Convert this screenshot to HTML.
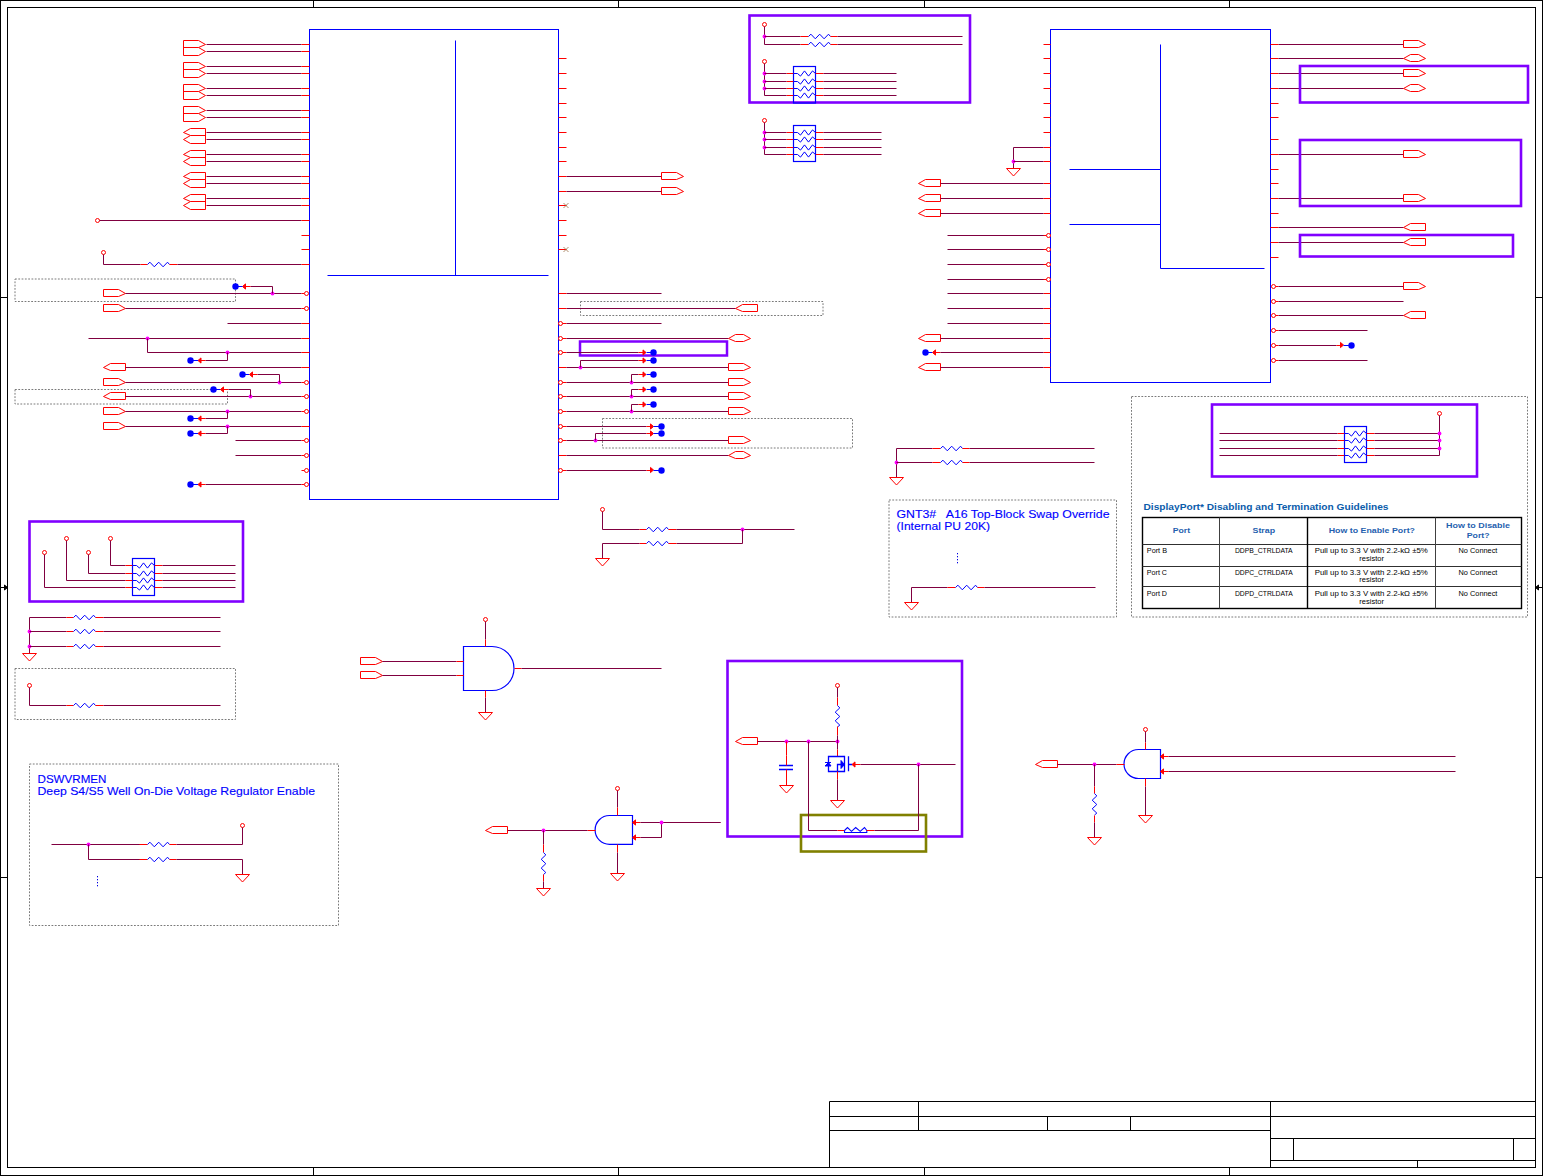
<!DOCTYPE html>
<html><head><meta charset="utf-8"><style>
html,body{margin:0;padding:0;background:#fff;width:1544px;height:1176px;overflow:hidden}
svg{display:block}
text{font-family:"Liberation Sans",sans-serif}
</style></head><body>
<svg width="1544" height="1176" viewBox="0 0 1544 1176">
<rect x="0" y="0" width="1544" height="1176" fill="#fff"/>
<rect x="0.5" y="0.5" width="1542" height="1175" stroke="#000" stroke-width="1" fill="none"/>
<rect x="7.5" y="7.5" width="1528" height="1160" stroke="#000" stroke-width="1" fill="none"/>
<polyline points="313.5,0.5 313.5,7.5" stroke="#000" stroke-width="1" fill="none"/>
<polyline points="313.5,1167.5 313.5,1175.5" stroke="#000" stroke-width="1" fill="none"/>
<polyline points="618.5,0.5 618.5,7.5" stroke="#000" stroke-width="1" fill="none"/>
<polyline points="618.5,1167.5 618.5,1175.5" stroke="#000" stroke-width="1" fill="none"/>
<polyline points="924.5,0.5 924.5,7.5" stroke="#000" stroke-width="1" fill="none"/>
<polyline points="924.5,1167.5 924.5,1175.5" stroke="#000" stroke-width="1" fill="none"/>
<polyline points="1229.5,0.5 1229.5,7.5" stroke="#000" stroke-width="1" fill="none"/>
<polyline points="1229.5,1167.5 1229.5,1175.5" stroke="#000" stroke-width="1" fill="none"/>
<polyline points="0.5,297.5 7.5,297.5" stroke="#000" stroke-width="1" fill="none"/>
<polyline points="1535.5,297.5 1542.5,297.5" stroke="#000" stroke-width="1" fill="none"/>
<polyline points="0.5,877.5 7.5,877.5" stroke="#000" stroke-width="1" fill="none"/>
<polyline points="1535.5,877.5 1542.5,877.5" stroke="#000" stroke-width="1" fill="none"/>
<polyline points="0.5,587.5 7.5,587.5" stroke="#000" stroke-width="1" fill="none"/>
<polygon points="7.5,587.5 4.5,585 4.5,590" stroke="#000" stroke-width="1" fill="#000"/>
<polyline points="1535.5,587.5 1542.5,587.5" stroke="#000" stroke-width="1" fill="none"/>
<polygon points="1535.5,587.5 1538.5,585 1538.5,590" stroke="#000" stroke-width="1" fill="#000"/>
<polyline points="829.5,1101.5 1535.5,1101.5" stroke="#000" stroke-width="1" fill="none"/>
<polyline points="829.5,1116.5 1535.5,1116.5" stroke="#000" stroke-width="1" fill="none"/>
<polyline points="829.5,1130.5 1270.5,1130.5" stroke="#000" stroke-width="1" fill="none"/>
<polyline points="829.5,1101.5 829.5,1167.5" stroke="#000" stroke-width="1" fill="none"/>
<polyline points="918.5,1101.5 918.5,1130.5" stroke="#000" stroke-width="1" fill="none"/>
<polyline points="1047.5,1116.5 1047.5,1130.5" stroke="#000" stroke-width="1" fill="none"/>
<polyline points="1130.5,1116.5 1130.5,1130.5" stroke="#000" stroke-width="1" fill="none"/>
<polyline points="1270.5,1101.5 1270.5,1167.5" stroke="#000" stroke-width="1" fill="none"/>
<polyline points="1270.5,1138.5 1535.5,1138.5" stroke="#000" stroke-width="1" fill="none"/>
<polyline points="1270.5,1160.5 1535.5,1160.5" stroke="#000" stroke-width="1" fill="none"/>
<polyline points="1293.5,1138.5 1293.5,1160.5" stroke="#000" stroke-width="1" fill="none"/>
<polyline points="1513.5,1138.5 1513.5,1160.5" stroke="#000" stroke-width="1" fill="none"/>
<polyline points="1417.5,1160.5 1417.5,1167.5" stroke="#000" stroke-width="1" fill="none"/>
<rect x="309.5" y="29.5" width="249" height="470" stroke="#0000ff" stroke-width="1" fill="none"/>
<polyline points="455.5,40.5 455.5,275.5" stroke="#0000ff" stroke-width="1" fill="none"/>
<polyline points="327.5,275.5 548.5,275.5" stroke="#0000ff" stroke-width="1" fill="none"/>
<polyline points="198.5,40.5 183.5,40.5 183.5,55.5 198.5,55.5 205.5,51.5 198.5,47.5 205.5,44.5 198.5,40.5" stroke="#ff0000" stroke-width="1" fill="none"/>
<polyline points="183.5,47.5 198.5,47.5" stroke="#ff0000" stroke-width="1" fill="none"/>
<polyline points="206.5,44.5 301.5,44.5" stroke="#800040" stroke-width="1" fill="none"/>
<polyline points="301.5,44.5 309.5,44.5" stroke="#ff0000" stroke-width="1" fill="none"/>
<polyline points="206.5,51.5 301.5,51.5" stroke="#800040" stroke-width="1" fill="none"/>
<polyline points="301.5,51.5 309.5,51.5" stroke="#ff0000" stroke-width="1" fill="none"/>
<polyline points="198.5,62.5 183.5,62.5 183.5,77.5 198.5,77.5 205.5,73.5 198.5,69.5 205.5,66.5 198.5,62.5" stroke="#ff0000" stroke-width="1" fill="none"/>
<polyline points="183.5,69.5 198.5,69.5" stroke="#ff0000" stroke-width="1" fill="none"/>
<polyline points="206.5,66.5 301.5,66.5" stroke="#800040" stroke-width="1" fill="none"/>
<polyline points="301.5,66.5 309.5,66.5" stroke="#ff0000" stroke-width="1" fill="none"/>
<polyline points="206.5,73.5 301.5,73.5" stroke="#800040" stroke-width="1" fill="none"/>
<polyline points="301.5,73.5 309.5,73.5" stroke="#ff0000" stroke-width="1" fill="none"/>
<polyline points="198.5,84.5 183.5,84.5 183.5,99.5 198.5,99.5 205.5,95.5 198.5,91.5 205.5,88.5 198.5,84.5" stroke="#ff0000" stroke-width="1" fill="none"/>
<polyline points="183.5,91.5 198.5,91.5" stroke="#ff0000" stroke-width="1" fill="none"/>
<polyline points="206.5,88.5 301.5,88.5" stroke="#800040" stroke-width="1" fill="none"/>
<polyline points="301.5,88.5 309.5,88.5" stroke="#ff0000" stroke-width="1" fill="none"/>
<polyline points="206.5,95.5 301.5,95.5" stroke="#800040" stroke-width="1" fill="none"/>
<polyline points="301.5,95.5 309.5,95.5" stroke="#ff0000" stroke-width="1" fill="none"/>
<polyline points="198.5,106.5 183.5,106.5 183.5,121.5 198.5,121.5 205.5,117.5 198.5,113.5 205.5,110.5 198.5,106.5" stroke="#ff0000" stroke-width="1" fill="none"/>
<polyline points="183.5,113.5 198.5,113.5" stroke="#ff0000" stroke-width="1" fill="none"/>
<polyline points="206.5,110.5 301.5,110.5" stroke="#800040" stroke-width="1" fill="none"/>
<polyline points="301.5,110.5 309.5,110.5" stroke="#ff0000" stroke-width="1" fill="none"/>
<polyline points="206.5,117.5 301.5,117.5" stroke="#800040" stroke-width="1" fill="none"/>
<polyline points="301.5,117.5 309.5,117.5" stroke="#ff0000" stroke-width="1" fill="none"/>
<polyline points="190.5,128.5 205.5,128.5 205.5,143.5 190.5,143.5 183.5,139.5 190.5,135.5 183.5,132.5 190.5,128.5" stroke="#ff0000" stroke-width="1" fill="none"/>
<polyline points="190.5,135.5 205.5,135.5" stroke="#ff0000" stroke-width="1" fill="none"/>
<polyline points="206.5,132.5 301.5,132.5" stroke="#800040" stroke-width="1" fill="none"/>
<polyline points="301.5,132.5 309.5,132.5" stroke="#ff0000" stroke-width="1" fill="none"/>
<polyline points="206.5,139.5 301.5,139.5" stroke="#800040" stroke-width="1" fill="none"/>
<polyline points="301.5,139.5 309.5,139.5" stroke="#ff0000" stroke-width="1" fill="none"/>
<polyline points="190.5,150.5 205.5,150.5 205.5,165.5 190.5,165.5 183.5,161.5 190.5,157.5 183.5,154.5 190.5,150.5" stroke="#ff0000" stroke-width="1" fill="none"/>
<polyline points="190.5,157.5 205.5,157.5" stroke="#ff0000" stroke-width="1" fill="none"/>
<polyline points="206.5,154.5 301.5,154.5" stroke="#800040" stroke-width="1" fill="none"/>
<polyline points="301.5,154.5 309.5,154.5" stroke="#ff0000" stroke-width="1" fill="none"/>
<polyline points="206.5,161.5 301.5,161.5" stroke="#800040" stroke-width="1" fill="none"/>
<polyline points="301.5,161.5 309.5,161.5" stroke="#ff0000" stroke-width="1" fill="none"/>
<polyline points="190.5,172.5 205.5,172.5 205.5,187.5 190.5,187.5 183.5,183.5 190.5,179.5 183.5,176.5 190.5,172.5" stroke="#ff0000" stroke-width="1" fill="none"/>
<polyline points="190.5,179.5 205.5,179.5" stroke="#ff0000" stroke-width="1" fill="none"/>
<polyline points="206.5,176.5 301.5,176.5" stroke="#800040" stroke-width="1" fill="none"/>
<polyline points="301.5,176.5 309.5,176.5" stroke="#ff0000" stroke-width="1" fill="none"/>
<polyline points="206.5,183.5 301.5,183.5" stroke="#800040" stroke-width="1" fill="none"/>
<polyline points="301.5,183.5 309.5,183.5" stroke="#ff0000" stroke-width="1" fill="none"/>
<polyline points="190.5,194.5 205.5,194.5 205.5,209.5 190.5,209.5 183.5,205.5 190.5,201.5 183.5,198.5 190.5,194.5" stroke="#ff0000" stroke-width="1" fill="none"/>
<polyline points="190.5,201.5 205.5,201.5" stroke="#ff0000" stroke-width="1" fill="none"/>
<polyline points="206.5,198.5 301.5,198.5" stroke="#800040" stroke-width="1" fill="none"/>
<polyline points="301.5,198.5 309.5,198.5" stroke="#ff0000" stroke-width="1" fill="none"/>
<polyline points="206.5,205.5 301.5,205.5" stroke="#800040" stroke-width="1" fill="none"/>
<polyline points="301.5,205.5 309.5,205.5" stroke="#ff0000" stroke-width="1" fill="none"/>
<circle cx="97.5" cy="220.5" r="2" stroke="#ff0000" stroke-width="1" fill="#fff"/>
<polyline points="99.5,220.5 301.5,220.5" stroke="#800040" stroke-width="1" fill="none"/>
<polyline points="301.5,220.5 309.5,220.5" stroke="#ff0000" stroke-width="1" fill="none"/>
<polyline points="301.5,235.5 309.5,235.5" stroke="#ff0000" stroke-width="1" fill="none"/>
<polyline points="301.5,249.5 309.5,249.5" stroke="#ff0000" stroke-width="1" fill="none"/>
<circle cx="103.5" cy="252.5" r="2" stroke="#ff0000" stroke-width="1" fill="#fff"/>
<polyline points="103.5,254.5 103.5,264.5 140.5,264.5" stroke="#800040" stroke-width="1" fill="none"/>
<polyline points="140.5,264.5 147.5,264.5" stroke="#ff0000" stroke-width="1" fill="none"/>
<polyline points="147.5,264.5 149.9,262.2 154.3,266.8 158.7,262.2 163.1,266.8 167.5,262.2 169.5,264.5" stroke="#0000ff" stroke-width="1" fill="none"/>
<polyline points="169.5,264.5 177.5,264.5" stroke="#ff0000" stroke-width="1" fill="none"/>
<polyline points="177.5,264.5 301.5,264.5" stroke="#800040" stroke-width="1" fill="none"/>
<polyline points="301.5,264.5 309.5,264.5" stroke="#ff0000" stroke-width="1" fill="none"/>
<rect x="15" y="279" width="220.5" height="22.5" stroke="#7a7a7a" stroke-width="1" fill="none" stroke-dasharray="1.8,1.5"/>
<polygon points="103.5,289.5 118.5,289.5 125.5,293.5 118.5,296.5 103.5,296.5" stroke="#ff0000" stroke-width="1" fill="none"/>
<polyline points="125.5,293.5 301.5,293.5" stroke="#800040" stroke-width="1" fill="none"/>
<polyline points="301.5,293.5 304.5,293.5" stroke="#ff0000" stroke-width="1" fill="none"/>
<circle cx="306.5" cy="293.5" r="2" stroke="#ff0000" stroke-width="1" fill="#fff"/>
<circle cx="272.5" cy="293.5" r="1.9" fill="#ff00ff"/>
<polyline points="272.5,293.5 272.5,286.5 250.5,286.5" stroke="#800040" stroke-width="1" fill="none"/>
<polyline points="245.5,286.5 250.5,286.5" stroke="#ff0000" stroke-width="1" fill="none"/>
<polygon points="242.5,286.5 245.5,283.9 245.5,289.1" stroke="#ff0000" stroke-width="1" fill="#ff0000"/>
<polyline points="235.5,286.5 242.5,286.5" stroke="#0000ff" stroke-width="1" fill="none"/>
<circle cx="235.5" cy="286.5" r="3.2" fill="#0000ff"/>
<polygon points="103.5,304.5 118.5,304.5 125.5,308.5 118.5,311.5 103.5,311.5" stroke="#ff0000" stroke-width="1" fill="none"/>
<polyline points="125.5,308.5 301.5,308.5" stroke="#800040" stroke-width="1" fill="none"/>
<polyline points="301.5,308.5 304.5,308.5" stroke="#ff0000" stroke-width="1" fill="none"/>
<circle cx="306.5" cy="308.5" r="2" stroke="#ff0000" stroke-width="1" fill="#fff"/>
<polyline points="227.5,323.5 301.5,323.5" stroke="#800040" stroke-width="1" fill="none"/>
<polyline points="301.5,323.5 309.5,323.5" stroke="#ff0000" stroke-width="1" fill="none"/>
<polyline points="88.5,338.5 301.5,338.5" stroke="#800040" stroke-width="1" fill="none"/>
<polyline points="301.5,338.5 309.5,338.5" stroke="#ff0000" stroke-width="1" fill="none"/>
<circle cx="147.5" cy="338.5" r="1.9" fill="#ff00ff"/>
<polyline points="147.5,338.5 147.5,352.5 301.5,352.5" stroke="#800040" stroke-width="1" fill="none"/>
<polyline points="301.5,352.5 309.5,352.5" stroke="#ff0000" stroke-width="1" fill="none"/>
<circle cx="227.5" cy="352.5" r="1.9" fill="#ff00ff"/>
<polyline points="227.5,352.5 227.5,360.5 205.5,360.5" stroke="#800040" stroke-width="1" fill="none"/>
<circle cx="190.5" cy="360.5" r="3.2" fill="#0000ff"/>
<polyline points="190.5,360.5 198.5,360.5" stroke="#0000ff" stroke-width="1" fill="none"/>
<polygon points="198,360.5 201,357.9 201,363.1" stroke="#ff0000" stroke-width="1" fill="#ff0000"/>
<polyline points="200.5,360.5 205.5,360.5" stroke="#ff0000" stroke-width="1" fill="none"/>
<polygon points="103.5,367.5 110.5,363.5 125.5,363.5 125.5,370.5 110.5,370.5" stroke="#ff0000" stroke-width="1" fill="none"/>
<polyline points="125.5,367.5 301.5,367.5" stroke="#800040" stroke-width="1" fill="none"/>
<polyline points="301.5,367.5 309.5,367.5" stroke="#ff0000" stroke-width="1" fill="none"/>
<polygon points="103.5,378.5 118.5,378.5 125.5,382.5 118.5,385.5 103.5,385.5" stroke="#ff0000" stroke-width="1" fill="none"/>
<polyline points="125.5,382.5 301.5,382.5" stroke="#800040" stroke-width="1" fill="none"/>
<polyline points="301.5,382.5 304.5,382.5" stroke="#ff0000" stroke-width="1" fill="none"/>
<circle cx="306.5" cy="382.5" r="2" stroke="#ff0000" stroke-width="1" fill="#fff"/>
<circle cx="279.5" cy="382.5" r="1.9" fill="#ff00ff"/>
<polyline points="279.5,382.5 279.5,374.5 257.5,374.5" stroke="#800040" stroke-width="1" fill="none"/>
<circle cx="242.5" cy="374.5" r="3.2" fill="#0000ff"/>
<polyline points="242.5,374.5 249.5,374.5" stroke="#0000ff" stroke-width="1" fill="none"/>
<polygon points="249.5,374.5 252.5,371.9 252.5,377.1" stroke="#ff0000" stroke-width="1" fill="#ff0000"/>
<polyline points="252.5,374.5 257.5,374.5" stroke="#ff0000" stroke-width="1" fill="none"/>
<rect x="15" y="389.5" width="212.5" height="14.5" stroke="#7a7a7a" stroke-width="1" fill="none" stroke-dasharray="1.8,1.5"/>
<polygon points="103.5,396.5 110.5,392.5 125.5,392.5 125.5,399.5 110.5,399.5" stroke="#ff0000" stroke-width="1" fill="none"/>
<polyline points="125.5,396.5 301.5,396.5" stroke="#800040" stroke-width="1" fill="none"/>
<polyline points="301.5,396.5 304.5,396.5" stroke="#ff0000" stroke-width="1" fill="none"/>
<circle cx="306.5" cy="396.5" r="2" stroke="#ff0000" stroke-width="1" fill="#fff"/>
<circle cx="250.5" cy="396.5" r="1.9" fill="#ff00ff"/>
<polyline points="250.5,396.5 250.5,389.5 228.5,389.5" stroke="#800040" stroke-width="1" fill="none"/>
<circle cx="213.5" cy="389.5" r="3.2" fill="#0000ff"/>
<polyline points="213.5,389.5 220.5,389.5" stroke="#0000ff" stroke-width="1" fill="none"/>
<polygon points="220.5,389.5 223.5,386.9 223.5,392.1" stroke="#ff0000" stroke-width="1" fill="#ff0000"/>
<polyline points="223.5,389.5 228.5,389.5" stroke="#ff0000" stroke-width="1" fill="none"/>
<polygon points="103.5,407.5 118.5,407.5 125.5,411.5 118.5,414.5 103.5,414.5" stroke="#ff0000" stroke-width="1" fill="none"/>
<polyline points="125.5,411.5 301.5,411.5" stroke="#800040" stroke-width="1" fill="none"/>
<polyline points="301.5,411.5 304.5,411.5" stroke="#ff0000" stroke-width="1" fill="none"/>
<circle cx="306.5" cy="411.5" r="2" stroke="#ff0000" stroke-width="1" fill="#fff"/>
<circle cx="227.5" cy="411.5" r="1.9" fill="#ff00ff"/>
<polyline points="227.5,411.5 227.5,418.5 205.5,418.5" stroke="#800040" stroke-width="1" fill="none"/>
<circle cx="190.5" cy="418.5" r="3.2" fill="#0000ff"/>
<polyline points="190.5,418.5 198.5,418.5" stroke="#0000ff" stroke-width="1" fill="none"/>
<polygon points="198,418.5 201,415.9 201,421.1" stroke="#ff0000" stroke-width="1" fill="#ff0000"/>
<polyline points="200.5,418.5 205.5,418.5" stroke="#ff0000" stroke-width="1" fill="none"/>
<polygon points="103.5,422.5 118.5,422.5 125.5,426.5 118.5,429.5 103.5,429.5" stroke="#ff0000" stroke-width="1" fill="none"/>
<polyline points="125.5,426.5 301.5,426.5" stroke="#800040" stroke-width="1" fill="none"/>
<polyline points="301.5,426.5 309.5,426.5" stroke="#ff0000" stroke-width="1" fill="none"/>
<circle cx="227.5" cy="426.5" r="1.9" fill="#ff00ff"/>
<polyline points="227.5,426.5 227.5,433.5 205.5,433.5" stroke="#800040" stroke-width="1" fill="none"/>
<circle cx="190.5" cy="433.5" r="3.2" fill="#0000ff"/>
<polyline points="190.5,433.5 198.5,433.5" stroke="#0000ff" stroke-width="1" fill="none"/>
<polygon points="198,433.5 201,430.9 201,436.1" stroke="#ff0000" stroke-width="1" fill="#ff0000"/>
<polyline points="200.5,433.5 205.5,433.5" stroke="#ff0000" stroke-width="1" fill="none"/>
<polyline points="235.5,440.5 301.5,440.5" stroke="#800040" stroke-width="1" fill="none"/>
<polyline points="301.5,440.5 304.5,440.5" stroke="#ff0000" stroke-width="1" fill="none"/>
<circle cx="306.5" cy="440.5" r="2" stroke="#ff0000" stroke-width="1" fill="#fff"/>
<polyline points="235.5,455.5 301.5,455.5" stroke="#800040" stroke-width="1" fill="none"/>
<polyline points="301.5,455.5 304.5,455.5" stroke="#ff0000" stroke-width="1" fill="none"/>
<circle cx="306.5" cy="455.5" r="2" stroke="#ff0000" stroke-width="1" fill="#fff"/>
<polyline points="301.5,470.5 304.5,470.5" stroke="#ff0000" stroke-width="1" fill="none"/>
<circle cx="306.5" cy="470.5" r="2" stroke="#ff0000" stroke-width="1" fill="#fff"/>
<polyline points="205.5,484.5 301.5,484.5" stroke="#800040" stroke-width="1" fill="none"/>
<polyline points="301.5,484.5 304.5,484.5" stroke="#ff0000" stroke-width="1" fill="none"/>
<circle cx="306.5" cy="484.5" r="2" stroke="#ff0000" stroke-width="1" fill="#fff"/>
<circle cx="190.5" cy="484.5" r="3.2" fill="#0000ff"/>
<polyline points="190.5,484.5 198.5,484.5" stroke="#0000ff" stroke-width="1" fill="none"/>
<polygon points="198,484.5 201,481.9 201,487.1" stroke="#ff0000" stroke-width="1" fill="#ff0000"/>
<polyline points="200.5,484.5 205.5,484.5" stroke="#ff0000" stroke-width="1" fill="none"/>
<polyline points="558.5,58.5 566.5,58.5" stroke="#ff0000" stroke-width="1" fill="none"/>
<polyline points="558.5,73.5 566.5,73.5" stroke="#ff0000" stroke-width="1" fill="none"/>
<polyline points="558.5,88.5 566.5,88.5" stroke="#ff0000" stroke-width="1" fill="none"/>
<polyline points="558.5,103.5 566.5,103.5" stroke="#ff0000" stroke-width="1" fill="none"/>
<polyline points="558.5,117.5 566.5,117.5" stroke="#ff0000" stroke-width="1" fill="none"/>
<polyline points="558.5,132.5 566.5,132.5" stroke="#ff0000" stroke-width="1" fill="none"/>
<polyline points="558.5,147.5 566.5,147.5" stroke="#ff0000" stroke-width="1" fill="none"/>
<polyline points="558.5,161.5 566.5,161.5" stroke="#ff0000" stroke-width="1" fill="none"/>
<polyline points="558.5,176.5 566.5,176.5" stroke="#ff0000" stroke-width="1" fill="none"/>
<polyline points="558.5,191.5 566.5,191.5" stroke="#ff0000" stroke-width="1" fill="none"/>
<polyline points="558.5,205.5 566.5,205.5" stroke="#ff0000" stroke-width="1" fill="none"/>
<polyline points="558.5,220.5 566.5,220.5" stroke="#ff0000" stroke-width="1" fill="none"/>
<polyline points="558.5,235.5 566.5,235.5" stroke="#ff0000" stroke-width="1" fill="none"/>
<polyline points="558.5,249.5 566.5,249.5" stroke="#ff0000" stroke-width="1" fill="none"/>
<polyline points="563.5,203 568.5,208" stroke="#9a7048" stroke-width="0.8" fill="none"/>
<polyline points="563.5,208 568.5,203" stroke="#9a7048" stroke-width="0.8" fill="none"/>
<polyline points="563.5,247 568.5,252" stroke="#9a7048" stroke-width="0.8" fill="none"/>
<polyline points="563.5,252 568.5,247" stroke="#9a7048" stroke-width="0.8" fill="none"/>
<polyline points="566.5,176.5 661.5,176.5" stroke="#800040" stroke-width="1" fill="none"/>
<polygon points="661.5,172.5 676.5,172.5 683.5,176.5 676.5,179.5 661.5,179.5" stroke="#ff0000" stroke-width="1" fill="none"/>
<polyline points="566.5,191.5 661.5,191.5" stroke="#800040" stroke-width="1" fill="none"/>
<polygon points="661.5,187.5 676.5,187.5 683.5,191.5 676.5,194.5 661.5,194.5" stroke="#ff0000" stroke-width="1" fill="none"/>
<polyline points="566.5,293.5 661.5,293.5" stroke="#800040" stroke-width="1" fill="none"/>
<polyline points="558.5,293.5 566.5,293.5" stroke="#ff0000" stroke-width="1" fill="none"/>
<rect x="580.5" y="301.5" width="242.5" height="14" stroke="#7a7a7a" stroke-width="1" fill="none" stroke-dasharray="1.8,1.5"/>
<polyline points="566.5,308.5 735.5,308.5" stroke="#800040" stroke-width="1" fill="none"/>
<polyline points="558.5,308.5 566.5,308.5" stroke="#ff0000" stroke-width="1" fill="none"/>
<polygon points="735.5,308.5 742.5,304.5 757.5,304.5 757.5,311.5 742.5,311.5" stroke="#ff0000" stroke-width="1" fill="none"/>
<circle cx="560.5" cy="323.5" r="2" stroke="#ff0000" stroke-width="1" fill="#fff"/>
<polyline points="562.5,323.5 566.5,323.5" stroke="#ff0000" stroke-width="1" fill="none"/>
<polyline points="566.5,323.5 661.5,323.5" stroke="#800040" stroke-width="1" fill="none"/>
<circle cx="560.5" cy="338.5" r="2" stroke="#ff0000" stroke-width="1" fill="#fff"/>
<polyline points="562.5,338.5 566.5,338.5" stroke="#ff0000" stroke-width="1" fill="none"/>
<polyline points="566.5,338.5 728.5,338.5" stroke="#800040" stroke-width="1" fill="none"/>
<polygon points="728.5,338.5 735.5,334.5 743.5,334.5 750.5,338.5 743.5,341.5 735.5,341.5" stroke="#ff0000" stroke-width="1" fill="none"/>
<rect x="580" y="341.5" width="147" height="14" stroke="#8000ff" stroke-width="2.5" fill="none"/>
<circle cx="560.5" cy="352.5" r="2" stroke="#ff0000" stroke-width="1" fill="#fff"/>
<polyline points="562.5,352.5 566.5,352.5" stroke="#ff0000" stroke-width="1" fill="none"/>
<polyline points="566.5,352.5 638.5,352.5" stroke="#800040" stroke-width="1" fill="none"/>
<polyline points="638.5,352.5 643.5,352.5" stroke="#ff0000" stroke-width="1" fill="none"/>
<polygon points="646,352.5 643,349.9 643,355.1" stroke="#ff0000" stroke-width="1" fill="#ff0000"/>
<polyline points="646.5,352.5 653.5,352.5" stroke="#0000ff" stroke-width="1" fill="none"/>
<circle cx="653.5" cy="352.5" r="3.2" fill="#0000ff"/>
<polyline points="558.5,367.5 566.5,367.5" stroke="#ff0000" stroke-width="1" fill="none"/>
<polyline points="566.5,367.5 728.5,367.5" stroke="#800040" stroke-width="1" fill="none"/>
<polygon points="728.5,363.5 743.5,363.5 750.5,367.5 743.5,370.5 728.5,370.5" stroke="#ff0000" stroke-width="1" fill="none"/>
<circle cx="580.5" cy="367.5" r="1.9" fill="#ff00ff"/>
<polyline points="580.5,367.5 580.5,360.5 638.5,360.5" stroke="#800040" stroke-width="1" fill="none"/>
<polyline points="638.5,360.5 643.5,360.5" stroke="#ff0000" stroke-width="1" fill="none"/>
<polygon points="646,360.5 643,357.9 643,363.1" stroke="#ff0000" stroke-width="1" fill="#ff0000"/>
<polyline points="646.5,360.5 653.5,360.5" stroke="#0000ff" stroke-width="1" fill="none"/>
<circle cx="653.5" cy="360.5" r="3.2" fill="#0000ff"/>
<circle cx="560.5" cy="382.5" r="2" stroke="#ff0000" stroke-width="1" fill="#fff"/>
<polyline points="562.5,382.5 566.5,382.5" stroke="#ff0000" stroke-width="1" fill="none"/>
<polyline points="566.5,382.5 728.5,382.5" stroke="#800040" stroke-width="1" fill="none"/>
<polygon points="728.5,378.5 743.5,378.5 750.5,382.5 743.5,385.5 728.5,385.5" stroke="#ff0000" stroke-width="1" fill="none"/>
<circle cx="631.5" cy="382.5" r="1.9" fill="#ff00ff"/>
<polyline points="631.5,382.5 631.5,374.5 638.5,374.5" stroke="#800040" stroke-width="1" fill="none"/>
<polyline points="638.5,374.5 643.5,374.5" stroke="#ff0000" stroke-width="1" fill="none"/>
<polygon points="646,374.5 643,371.9 643,377.1" stroke="#ff0000" stroke-width="1" fill="#ff0000"/>
<polyline points="646.5,374.5 653.5,374.5" stroke="#0000ff" stroke-width="1" fill="none"/>
<circle cx="653.5" cy="374.5" r="3.2" fill="#0000ff"/>
<circle cx="560.5" cy="396.5" r="2" stroke="#ff0000" stroke-width="1" fill="#fff"/>
<polyline points="562.5,396.5 566.5,396.5" stroke="#ff0000" stroke-width="1" fill="none"/>
<polyline points="566.5,396.5 728.5,396.5" stroke="#800040" stroke-width="1" fill="none"/>
<polygon points="728.5,392.5 743.5,392.5 750.5,396.5 743.5,399.5 728.5,399.5" stroke="#ff0000" stroke-width="1" fill="none"/>
<circle cx="631.5" cy="396.5" r="1.9" fill="#ff00ff"/>
<polyline points="631.5,396.5 631.5,389.5 638.5,389.5" stroke="#800040" stroke-width="1" fill="none"/>
<polyline points="638.5,389.5 643.5,389.5" stroke="#ff0000" stroke-width="1" fill="none"/>
<polygon points="646,389.5 643,386.9 643,392.1" stroke="#ff0000" stroke-width="1" fill="#ff0000"/>
<polyline points="646.5,389.5 653.5,389.5" stroke="#0000ff" stroke-width="1" fill="none"/>
<circle cx="653.5" cy="389.5" r="3.2" fill="#0000ff"/>
<circle cx="560.5" cy="411.5" r="2" stroke="#ff0000" stroke-width="1" fill="#fff"/>
<polyline points="562.5,411.5 566.5,411.5" stroke="#ff0000" stroke-width="1" fill="none"/>
<polyline points="566.5,411.5 728.5,411.5" stroke="#800040" stroke-width="1" fill="none"/>
<polygon points="728.5,407.5 743.5,407.5 750.5,411.5 743.5,414.5 728.5,414.5" stroke="#ff0000" stroke-width="1" fill="none"/>
<circle cx="631.5" cy="411.5" r="1.9" fill="#ff00ff"/>
<polyline points="631.5,411.5 631.5,404.5 638.5,404.5" stroke="#800040" stroke-width="1" fill="none"/>
<polyline points="638.5,404.5 643.5,404.5" stroke="#ff0000" stroke-width="1" fill="none"/>
<polygon points="646,404.5 643,401.9 643,407.1" stroke="#ff0000" stroke-width="1" fill="#ff0000"/>
<polyline points="646.5,404.5 653.5,404.5" stroke="#0000ff" stroke-width="1" fill="none"/>
<circle cx="653.5" cy="404.5" r="3.2" fill="#0000ff"/>
<circle cx="560.5" cy="426.5" r="2" stroke="#ff0000" stroke-width="1" fill="#fff"/>
<polyline points="562.5,426.5 566.5,426.5" stroke="#ff0000" stroke-width="1" fill="none"/>
<polyline points="566.5,426.5 646.5,426.5" stroke="#800040" stroke-width="1" fill="none"/>
<polyline points="646.5,426.5 651.5,426.5" stroke="#ff0000" stroke-width="1" fill="none"/>
<polygon points="653.5,426.5 650.5,423.9 650.5,429.1" stroke="#ff0000" stroke-width="1" fill="#ff0000"/>
<polyline points="653.5,426.5 661.5,426.5" stroke="#0000ff" stroke-width="1" fill="none"/>
<circle cx="661.5" cy="426.5" r="3.2" fill="#0000ff"/>
<rect x="602.5" y="418.5" width="250" height="29.5" stroke="#7a7a7a" stroke-width="1" fill="none" stroke-dasharray="1.8,1.5"/>
<circle cx="560.5" cy="440.5" r="2" stroke="#ff0000" stroke-width="1" fill="#fff"/>
<polyline points="562.5,440.5 566.5,440.5" stroke="#ff0000" stroke-width="1" fill="none"/>
<polyline points="566.5,440.5 728.5,440.5" stroke="#800040" stroke-width="1" fill="none"/>
<polygon points="728.5,436.5 743.5,436.5 750.5,440.5 743.5,443.5 728.5,443.5" stroke="#ff0000" stroke-width="1" fill="none"/>
<circle cx="595.5" cy="440.5" r="1.9" fill="#ff00ff"/>
<polyline points="595.5,440.5 595.5,433.5 646.5,433.5" stroke="#800040" stroke-width="1" fill="none"/>
<polyline points="646.5,433.5 651.5,433.5" stroke="#ff0000" stroke-width="1" fill="none"/>
<polygon points="653.5,433.5 650.5,430.9 650.5,436.1" stroke="#ff0000" stroke-width="1" fill="#ff0000"/>
<polyline points="653.5,433.5 661.5,433.5" stroke="#0000ff" stroke-width="1" fill="none"/>
<circle cx="661.5" cy="433.5" r="3.2" fill="#0000ff"/>
<polyline points="558.5,455.5 566.5,455.5" stroke="#ff0000" stroke-width="1" fill="none"/>
<polyline points="566.5,455.5 728.5,455.5" stroke="#800040" stroke-width="1" fill="none"/>
<polygon points="728.5,455.5 735.5,451.5 743.5,451.5 750.5,455.5 743.5,458.5 735.5,458.5" stroke="#ff0000" stroke-width="1" fill="none"/>
<circle cx="560.5" cy="470.5" r="2" stroke="#ff0000" stroke-width="1" fill="#fff"/>
<polyline points="562.5,470.5 566.5,470.5" stroke="#ff0000" stroke-width="1" fill="none"/>
<polyline points="566.5,470.5 646.5,470.5" stroke="#800040" stroke-width="1" fill="none"/>
<polyline points="646.5,470.5 651.5,470.5" stroke="#ff0000" stroke-width="1" fill="none"/>
<polygon points="653.5,470 650.5,467.4 650.5,472.6" stroke="#ff0000" stroke-width="1" fill="#ff0000"/>
<polyline points="653.5,470.5 661.5,470.5" stroke="#0000ff" stroke-width="1" fill="none"/>
<circle cx="661.5" cy="470.5" r="3.2" fill="#0000ff"/>
<circle cx="602.5" cy="509.5" r="2" stroke="#ff0000" stroke-width="1" fill="#fff"/>
<polyline points="602.5,511.5 602.5,529.5 639.5,529.5" stroke="#800040" stroke-width="1" fill="none"/>
<polyline points="639.5,529.5 646.5,529.5" stroke="#ff0000" stroke-width="1" fill="none"/>
<polyline points="646.5,529.5 648.9,527.2 653.3,531.8 657.7,527.2 662.1,531.8 666.5,527.2 668.5,529.5" stroke="#0000ff" stroke-width="1" fill="none"/>
<polyline points="668.5,529.5 676.5,529.5" stroke="#ff0000" stroke-width="1" fill="none"/>
<polyline points="676.5,529.5 794.5,529.5" stroke="#800040" stroke-width="1" fill="none"/>
<circle cx="742.5" cy="529.5" r="1.9" fill="#ff00ff"/>
<polyline points="742.5,529.5 742.5,543.5 676.5,543.5" stroke="#800040" stroke-width="1" fill="none"/>
<polyline points="639.5,543.5 646.5,543.5" stroke="#ff0000" stroke-width="1" fill="none"/>
<polyline points="646.5,543.5 648.9,541.2 653.3,545.8 657.7,541.2 662.1,545.8 666.5,541.2 668.5,543.5" stroke="#0000ff" stroke-width="1" fill="none"/>
<polyline points="668.5,543.5 676.5,543.5" stroke="#ff0000" stroke-width="1" fill="none"/>
<polyline points="602.5,543.5 639.5,543.5" stroke="#800040" stroke-width="1" fill="none"/>
<polyline points="602.5,543.5 602.5,558.5" stroke="#800040" stroke-width="1" fill="none"/>
<polygon points="595.5,558.5 609.5,558.5 602.5,566" stroke="#ff0000" stroke-width="1" fill="none"/>
<rect x="749.5" y="15.5" width="220.5" height="87" stroke="#8000ff" stroke-width="2.6" fill="none"/>
<circle cx="764.5" cy="24.5" r="2" stroke="#ff0000" stroke-width="1" fill="#fff"/>
<polyline points="764.5,26.5 764.5,44.5" stroke="#800040" stroke-width="1" fill="none"/>
<circle cx="764.5" cy="36.5" r="1.9" fill="#ff00ff"/>
<polyline points="764.5,36.5 800.5,36.5" stroke="#800040" stroke-width="1" fill="none"/>
<polyline points="800.5,36.5 808.5,36.5" stroke="#ff0000" stroke-width="1" fill="none"/>
<polyline points="808.5,36.5 810.9,34.2 815.3,38.8 819.7,34.2 824.1,38.8 828.5,34.2 830.5,36.5" stroke="#0000ff" stroke-width="1" fill="none"/>
<polyline points="830.5,36.5 837.5,36.5" stroke="#ff0000" stroke-width="1" fill="none"/>
<polyline points="837.5,36.5 962.5,36.5" stroke="#800040" stroke-width="1" fill="none"/>
<polyline points="764.5,44.5 800.5,44.5" stroke="#800040" stroke-width="1" fill="none"/>
<polyline points="800.5,44.5 808.5,44.5" stroke="#ff0000" stroke-width="1" fill="none"/>
<polyline points="808.5,44.5 810.9,42.2 815.3,46.8 819.7,42.2 824.1,46.8 828.5,42.2 830.5,44.5" stroke="#0000ff" stroke-width="1" fill="none"/>
<polyline points="830.5,44.5 837.5,44.5" stroke="#ff0000" stroke-width="1" fill="none"/>
<polyline points="837.5,44.5 962.5,44.5" stroke="#800040" stroke-width="1" fill="none"/>
<circle cx="764.5" cy="61.5" r="2" stroke="#ff0000" stroke-width="1" fill="#fff"/>
<polyline points="764.5,63.5 764.5,95.5" stroke="#800040" stroke-width="1" fill="none"/>
<circle cx="764.5" cy="73.5" r="1.9" fill="#ff00ff"/>
<circle cx="764.5" cy="81.5" r="1.9" fill="#ff00ff"/>
<circle cx="764.5" cy="88.5" r="1.9" fill="#ff00ff"/>
<rect x="793.5" y="66.5" width="22" height="36.5" stroke="#0000ff" stroke-width="1.2" fill="none"/>
<polyline points="786.5,73.5 793.5,73.5" stroke="#ff0000" stroke-width="1" fill="none"/>
<polyline points="815.5,73.5 823.5,73.5" stroke="#ff0000" stroke-width="1" fill="none"/>
<polyline points="793.5,73.5 797.5,73.5 800.5,76.1 804.5,70.9 808.5,76.1 812.5,70.9 815.5,73.5" stroke="#0000ff" stroke-width="1" fill="none"/>
<polyline points="764.5,73.5 786.5,73.5" stroke="#800040" stroke-width="1" fill="none"/>
<polyline points="823.5,73.5 896.5,73.5" stroke="#800040" stroke-width="1" fill="none"/>
<polyline points="786.5,81.5 793.5,81.5" stroke="#ff0000" stroke-width="1" fill="none"/>
<polyline points="815.5,81.5 823.5,81.5" stroke="#ff0000" stroke-width="1" fill="none"/>
<polyline points="793.5,81.5 797.5,81.5 800.5,84.1 804.5,78.9 808.5,84.1 812.5,78.9 815.5,81.5" stroke="#0000ff" stroke-width="1" fill="none"/>
<polyline points="764.5,81.5 786.5,81.5" stroke="#800040" stroke-width="1" fill="none"/>
<polyline points="823.5,81.5 896.5,81.5" stroke="#800040" stroke-width="1" fill="none"/>
<polyline points="786.5,88.5 793.5,88.5" stroke="#ff0000" stroke-width="1" fill="none"/>
<polyline points="815.5,88.5 823.5,88.5" stroke="#ff0000" stroke-width="1" fill="none"/>
<polyline points="793.5,88.5 797.5,88.5 800.5,91.1 804.5,85.9 808.5,91.1 812.5,85.9 815.5,88.5" stroke="#0000ff" stroke-width="1" fill="none"/>
<polyline points="764.5,88.5 786.5,88.5" stroke="#800040" stroke-width="1" fill="none"/>
<polyline points="823.5,88.5 896.5,88.5" stroke="#800040" stroke-width="1" fill="none"/>
<polyline points="786.5,95.5 793.5,95.5" stroke="#ff0000" stroke-width="1" fill="none"/>
<polyline points="815.5,95.5 823.5,95.5" stroke="#ff0000" stroke-width="1" fill="none"/>
<polyline points="793.5,95.5 797.5,95.5 800.5,98.1 804.5,92.9 808.5,98.1 812.5,92.9 815.5,95.5" stroke="#0000ff" stroke-width="1" fill="none"/>
<polyline points="764.5,95.5 786.5,95.5" stroke="#800040" stroke-width="1" fill="none"/>
<polyline points="823.5,95.5 896.5,95.5" stroke="#800040" stroke-width="1" fill="none"/>
<circle cx="764.5" cy="120.5" r="2" stroke="#ff0000" stroke-width="1" fill="#fff"/>
<polyline points="764.5,122.5 764.5,154.5" stroke="#800040" stroke-width="1" fill="none"/>
<circle cx="764.5" cy="132.5" r="1.9" fill="#ff00ff"/>
<circle cx="764.5" cy="139.5" r="1.9" fill="#ff00ff"/>
<circle cx="764.5" cy="147.5" r="1.9" fill="#ff00ff"/>
<rect x="793.5" y="125.5" width="22" height="36" stroke="#0000ff" stroke-width="1.2" fill="none"/>
<polyline points="786.5,132.5 793.5,132.5" stroke="#ff0000" stroke-width="1" fill="none"/>
<polyline points="815.5,132.5 823.5,132.5" stroke="#ff0000" stroke-width="1" fill="none"/>
<polyline points="793.5,132.5 797.5,132.5 800.5,135.1 804.5,129.9 808.5,135.1 812.5,129.9 815.5,132.5" stroke="#0000ff" stroke-width="1" fill="none"/>
<polyline points="764.5,132.5 786.5,132.5" stroke="#800040" stroke-width="1" fill="none"/>
<polyline points="823.5,132.5 881.5,132.5" stroke="#800040" stroke-width="1" fill="none"/>
<polyline points="786.5,139.5 793.5,139.5" stroke="#ff0000" stroke-width="1" fill="none"/>
<polyline points="815.5,139.5 823.5,139.5" stroke="#ff0000" stroke-width="1" fill="none"/>
<polyline points="793.5,139.5 797.5,139.5 800.5,142.1 804.5,136.9 808.5,142.1 812.5,136.9 815.5,139.5" stroke="#0000ff" stroke-width="1" fill="none"/>
<polyline points="764.5,139.5 786.5,139.5" stroke="#800040" stroke-width="1" fill="none"/>
<polyline points="823.5,139.5 881.5,139.5" stroke="#800040" stroke-width="1" fill="none"/>
<polyline points="786.5,147.5 793.5,147.5" stroke="#ff0000" stroke-width="1" fill="none"/>
<polyline points="815.5,147.5 823.5,147.5" stroke="#ff0000" stroke-width="1" fill="none"/>
<polyline points="793.5,147.5 797.5,147.5 800.5,150.1 804.5,144.9 808.5,150.1 812.5,144.9 815.5,147.5" stroke="#0000ff" stroke-width="1" fill="none"/>
<polyline points="764.5,147.5 786.5,147.5" stroke="#800040" stroke-width="1" fill="none"/>
<polyline points="823.5,147.5 881.5,147.5" stroke="#800040" stroke-width="1" fill="none"/>
<polyline points="786.5,154.5 793.5,154.5" stroke="#ff0000" stroke-width="1" fill="none"/>
<polyline points="815.5,154.5 823.5,154.5" stroke="#ff0000" stroke-width="1" fill="none"/>
<polyline points="793.5,154.5 797.5,154.5 800.5,157.1 804.5,151.9 808.5,157.1 812.5,151.9 815.5,154.5" stroke="#0000ff" stroke-width="1" fill="none"/>
<polyline points="764.5,154.5 786.5,154.5" stroke="#800040" stroke-width="1" fill="none"/>
<polyline points="823.5,154.5 881.5,154.5" stroke="#800040" stroke-width="1" fill="none"/>
<rect x="1050.5" y="29.5" width="220" height="353" stroke="#0000ff" stroke-width="1" fill="none"/>
<polyline points="1160.5,44.5 1160.5,268.5" stroke="#0000ff" stroke-width="1" fill="none"/>
<polyline points="1069.5,169.5 1160.5,169.5" stroke="#0000ff" stroke-width="1" fill="none"/>
<polyline points="1069.5,224.5 1160.5,224.5" stroke="#0000ff" stroke-width="1" fill="none"/>
<polyline points="1160.5,268.5 1264.5,268.5" stroke="#0000ff" stroke-width="1" fill="none"/>
<polyline points="1043.5,44.5 1050.5,44.5" stroke="#ff0000" stroke-width="1" fill="none"/>
<polyline points="1043.5,58.5 1050.5,58.5" stroke="#ff0000" stroke-width="1" fill="none"/>
<polyline points="1043.5,73.5 1050.5,73.5" stroke="#ff0000" stroke-width="1" fill="none"/>
<polyline points="1043.5,88.5 1050.5,88.5" stroke="#ff0000" stroke-width="1" fill="none"/>
<polyline points="1043.5,103.5 1050.5,103.5" stroke="#ff0000" stroke-width="1" fill="none"/>
<polyline points="1043.5,117.5 1050.5,117.5" stroke="#ff0000" stroke-width="1" fill="none"/>
<polyline points="1043.5,132.5 1050.5,132.5" stroke="#ff0000" stroke-width="1" fill="none"/>
<polyline points="1043.5,147.5 1050.5,147.5" stroke="#ff0000" stroke-width="1" fill="none"/>
<polyline points="1043.5,161.5 1050.5,161.5" stroke="#ff0000" stroke-width="1" fill="none"/>
<polyline points="1043.5,183.5 1050.5,183.5" stroke="#ff0000" stroke-width="1" fill="none"/>
<polyline points="1043.5,198.5 1050.5,198.5" stroke="#ff0000" stroke-width="1" fill="none"/>
<polyline points="1043.5,213.5 1050.5,213.5" stroke="#ff0000" stroke-width="1" fill="none"/>
<polyline points="1043.5,293.5 1050.5,293.5" stroke="#ff0000" stroke-width="1" fill="none"/>
<polyline points="1043.5,308.5 1050.5,308.5" stroke="#ff0000" stroke-width="1" fill="none"/>
<polyline points="1043.5,323.5 1050.5,323.5" stroke="#ff0000" stroke-width="1" fill="none"/>
<polyline points="1043.5,338.5 1050.5,338.5" stroke="#ff0000" stroke-width="1" fill="none"/>
<polyline points="1043.5,352.5 1050.5,352.5" stroke="#ff0000" stroke-width="1" fill="none"/>
<polyline points="1043.5,367.5 1050.5,367.5" stroke="#ff0000" stroke-width="1" fill="none"/>
<polyline points="1043.5,147.5 1013.5,147.5 1013.5,168.5" stroke="#800040" stroke-width="1" fill="none"/>
<circle cx="1013.5" cy="161.5" r="1.9" fill="#ff00ff"/>
<polyline points="1013.5,161.5 1043.5,161.5" stroke="#800040" stroke-width="1" fill="none"/>
<polygon points="1006.5,168.5 1020.5,168.5 1013.5,176" stroke="#ff0000" stroke-width="1" fill="none"/>
<polygon points="918.5,183.5 925.5,179.5 940.5,179.5 940.5,186.5 925.5,186.5" stroke="#ff0000" stroke-width="1" fill="none"/>
<polyline points="940.5,183.5 1043.5,183.5" stroke="#800040" stroke-width="1" fill="none"/>
<polygon points="918.5,198.5 925.5,194.5 940.5,194.5 940.5,201.5 925.5,201.5" stroke="#ff0000" stroke-width="1" fill="none"/>
<polyline points="940.5,198.5 1043.5,198.5" stroke="#800040" stroke-width="1" fill="none"/>
<polygon points="918.5,213.5 925.5,209.5 940.5,209.5 940.5,216.5 925.5,216.5" stroke="#ff0000" stroke-width="1" fill="none"/>
<polyline points="940.5,213.5 1043.5,213.5" stroke="#800040" stroke-width="1" fill="none"/>
<polygon points="918.5,338.5 925.5,334.5 940.5,334.5 940.5,341.5 925.5,341.5" stroke="#ff0000" stroke-width="1" fill="none"/>
<polyline points="940.5,338.5 1043.5,338.5" stroke="#800040" stroke-width="1" fill="none"/>
<polygon points="918.5,367.5 925.5,363.5 940.5,363.5 940.5,370.5 925.5,370.5" stroke="#ff0000" stroke-width="1" fill="none"/>
<polyline points="940.5,367.5 1043.5,367.5" stroke="#800040" stroke-width="1" fill="none"/>
<polyline points="947.5,235.5 1046.5,235.5" stroke="#800040" stroke-width="1" fill="none"/>
<polyline points="1043.5,235.5 1046.5,235.5" stroke="#ff0000" stroke-width="1" fill="none"/>
<circle cx="1048.5" cy="235.5" r="2" stroke="#ff0000" stroke-width="1" fill="#fff"/>
<polyline points="947.5,249.5 1046.5,249.5" stroke="#800040" stroke-width="1" fill="none"/>
<polyline points="1043.5,249.5 1046.5,249.5" stroke="#ff0000" stroke-width="1" fill="none"/>
<circle cx="1048.5" cy="249.5" r="2" stroke="#ff0000" stroke-width="1" fill="#fff"/>
<polyline points="947.5,264.5 1046.5,264.5" stroke="#800040" stroke-width="1" fill="none"/>
<polyline points="1043.5,264.5 1046.5,264.5" stroke="#ff0000" stroke-width="1" fill="none"/>
<circle cx="1048.5" cy="264.5" r="2" stroke="#ff0000" stroke-width="1" fill="#fff"/>
<polyline points="947.5,279.5 1046.5,279.5" stroke="#800040" stroke-width="1" fill="none"/>
<polyline points="1043.5,279.5 1046.5,279.5" stroke="#ff0000" stroke-width="1" fill="none"/>
<circle cx="1048.5" cy="279.5" r="2" stroke="#ff0000" stroke-width="1" fill="#fff"/>
<polyline points="947.5,293.5 1043.5,293.5" stroke="#800040" stroke-width="1" fill="none"/>
<polyline points="947.5,308.5 1043.5,308.5" stroke="#800040" stroke-width="1" fill="none"/>
<polyline points="947.5,323.5 1043.5,323.5" stroke="#800040" stroke-width="1" fill="none"/>
<circle cx="925.5" cy="352.5" r="3.2" fill="#0000ff"/>
<polyline points="925.5,352.5 932.5,352.5" stroke="#0000ff" stroke-width="1" fill="none"/>
<polygon points="932.5,352.5 935.5,349.9 935.5,355.1" stroke="#ff0000" stroke-width="1" fill="#ff0000"/>
<polyline points="935.5,352.5 940.5,352.5" stroke="#ff0000" stroke-width="1" fill="none"/>
<polyline points="940.5,352.5 1043.5,352.5" stroke="#800040" stroke-width="1" fill="none"/>
<polyline points="1270.5,44.5 1278.5,44.5" stroke="#ff0000" stroke-width="1" fill="none"/>
<polyline points="1270.5,58.5 1278.5,58.5" stroke="#ff0000" stroke-width="1" fill="none"/>
<polyline points="1270.5,73.5 1278.5,73.5" stroke="#ff0000" stroke-width="1" fill="none"/>
<polyline points="1270.5,88.5 1278.5,88.5" stroke="#ff0000" stroke-width="1" fill="none"/>
<polyline points="1270.5,103.5 1278.5,103.5" stroke="#ff0000" stroke-width="1" fill="none"/>
<polyline points="1270.5,117.5 1278.5,117.5" stroke="#ff0000" stroke-width="1" fill="none"/>
<polyline points="1270.5,139.5 1278.5,139.5" stroke="#ff0000" stroke-width="1" fill="none"/>
<polyline points="1270.5,154.5 1278.5,154.5" stroke="#ff0000" stroke-width="1" fill="none"/>
<polyline points="1270.5,169.5 1278.5,169.5" stroke="#ff0000" stroke-width="1" fill="none"/>
<polyline points="1270.5,183.5 1278.5,183.5" stroke="#ff0000" stroke-width="1" fill="none"/>
<polyline points="1270.5,198.5 1278.5,198.5" stroke="#ff0000" stroke-width="1" fill="none"/>
<polyline points="1270.5,213.5 1278.5,213.5" stroke="#ff0000" stroke-width="1" fill="none"/>
<polyline points="1270.5,227.5 1278.5,227.5" stroke="#ff0000" stroke-width="1" fill="none"/>
<polyline points="1270.5,242.5 1278.5,242.5" stroke="#ff0000" stroke-width="1" fill="none"/>
<polyline points="1270.5,257.5 1278.5,257.5" stroke="#ff0000" stroke-width="1" fill="none"/>
<polyline points="1278.5,44.5 1403.5,44.5" stroke="#800040" stroke-width="1" fill="none"/>
<polygon points="1403.5,40.5 1418.5,40.5 1425.5,44.5 1418.5,47.5 1403.5,47.5" stroke="#ff0000" stroke-width="1" fill="none"/>
<polyline points="1278.5,58.5 1403.5,58.5" stroke="#800040" stroke-width="1" fill="none"/>
<polygon points="1403.5,58.5 1410.5,54.5 1418.5,54.5 1425.5,58.5 1418.5,61.5 1410.5,61.5" stroke="#ff0000" stroke-width="1" fill="none"/>
<polyline points="1278.5,73.5 1403.5,73.5" stroke="#800040" stroke-width="1" fill="none"/>
<polygon points="1403.5,69.5 1418.5,69.5 1425.5,73.5 1418.5,76.5 1403.5,76.5" stroke="#ff0000" stroke-width="1" fill="none"/>
<polyline points="1278.5,88.5 1403.5,88.5" stroke="#800040" stroke-width="1" fill="none"/>
<polygon points="1403.5,88.5 1410.5,84.5 1418.5,84.5 1425.5,88.5 1418.5,91.5 1410.5,91.5" stroke="#ff0000" stroke-width="1" fill="none"/>
<polyline points="1278.5,154.5 1403.5,154.5" stroke="#800040" stroke-width="1" fill="none"/>
<polygon points="1403.5,150.5 1418.5,150.5 1425.5,154.5 1418.5,157.5 1403.5,157.5" stroke="#ff0000" stroke-width="1" fill="none"/>
<polyline points="1278.5,198.5 1403.5,198.5" stroke="#800040" stroke-width="1" fill="none"/>
<polygon points="1403.5,194.5 1418.5,194.5 1425.5,198.5 1418.5,201.5 1403.5,201.5" stroke="#ff0000" stroke-width="1" fill="none"/>
<polyline points="1278.5,227.5 1403.5,227.5" stroke="#800040" stroke-width="1" fill="none"/>
<polygon points="1403.5,227.5 1410.5,223.5 1425.5,223.5 1425.5,230.5 1410.5,230.5" stroke="#ff0000" stroke-width="1" fill="none"/>
<polyline points="1278.5,242.5 1403.5,242.5" stroke="#800040" stroke-width="1" fill="none"/>
<polygon points="1403.5,242.5 1410.5,238.5 1425.5,238.5 1425.5,245.5 1410.5,245.5" stroke="#ff0000" stroke-width="1" fill="none"/>
<circle cx="1273.5" cy="286.5" r="2" stroke="#ff0000" stroke-width="1" fill="#fff"/>
<polyline points="1275.5,286.5 1278.5,286.5" stroke="#ff0000" stroke-width="1" fill="none"/>
<polyline points="1278.5,286.5 1403.5,286.5" stroke="#800040" stroke-width="1" fill="none"/>
<polygon points="1403.5,282.5 1418.5,282.5 1425.5,286.5 1418.5,289.5 1403.5,289.5" stroke="#ff0000" stroke-width="1" fill="none"/>
<circle cx="1273.5" cy="301.5" r="2" stroke="#ff0000" stroke-width="1" fill="#fff"/>
<polyline points="1275.5,301.5 1278.5,301.5" stroke="#ff0000" stroke-width="1" fill="none"/>
<polyline points="1278.5,301.5 1403.5,301.5" stroke="#800040" stroke-width="1" fill="none"/>
<circle cx="1273.5" cy="315.5" r="2" stroke="#ff0000" stroke-width="1" fill="#fff"/>
<polyline points="1275.5,315.5 1278.5,315.5" stroke="#ff0000" stroke-width="1" fill="none"/>
<polyline points="1278.5,315.5 1403.5,315.5" stroke="#800040" stroke-width="1" fill="none"/>
<polygon points="1403.5,315.5 1410.5,311.5 1425.5,311.5 1425.5,318.5 1410.5,318.5" stroke="#ff0000" stroke-width="1" fill="none"/>
<circle cx="1273.5" cy="330.5" r="2" stroke="#ff0000" stroke-width="1" fill="#fff"/>
<polyline points="1275.5,330.5 1278.5,330.5" stroke="#ff0000" stroke-width="1" fill="none"/>
<polyline points="1278.5,330.5 1367.5,330.5" stroke="#800040" stroke-width="1" fill="none"/>
<circle cx="1273.5" cy="345.5" r="2" stroke="#ff0000" stroke-width="1" fill="#fff"/>
<polyline points="1275.5,345.5 1278.5,345.5" stroke="#ff0000" stroke-width="1" fill="none"/>
<polyline points="1278.5,345.5 1336.5,345.5" stroke="#800040" stroke-width="1" fill="none"/>
<polyline points="1336.5,345.5 1341.5,345.5" stroke="#ff0000" stroke-width="1" fill="none"/>
<polygon points="1343.5,345 1340.5,342.4 1340.5,347.6" stroke="#ff0000" stroke-width="1" fill="#ff0000"/>
<polyline points="1343.5,345.5 1351.5,345.5" stroke="#0000ff" stroke-width="1" fill="none"/>
<circle cx="1351.5" cy="345.5" r="3.2" fill="#0000ff"/>
<circle cx="1273.5" cy="360.5" r="2" stroke="#ff0000" stroke-width="1" fill="#fff"/>
<polyline points="1275.5,360.5 1278.5,360.5" stroke="#ff0000" stroke-width="1" fill="none"/>
<polyline points="1278.5,360.5 1367.5,360.5" stroke="#800040" stroke-width="1" fill="none"/>
<rect x="1300" y="66" width="228" height="36.5" stroke="#8000ff" stroke-width="2.6" fill="none"/>
<rect x="1300" y="140" width="221" height="66" stroke="#8000ff" stroke-width="2.6" fill="none"/>
<rect x="1300" y="235" width="213" height="21.5" stroke="#8000ff" stroke-width="2.6" fill="none"/>
<polyline points="896.5,448.5 896.5,477.5" stroke="#800040" stroke-width="1" fill="none"/>
<circle cx="896.5" cy="462.5" r="1.9" fill="#ff00ff"/>
<polyline points="896.5,448.5 932.5,448.5" stroke="#800040" stroke-width="1" fill="none"/>
<polyline points="932.5,448.5 940.5,448.5" stroke="#ff0000" stroke-width="1" fill="none"/>
<polyline points="940.5,448.5 942.9,446.2 947.3,450.8 951.7,446.2 956.1,450.8 960.5,446.2 962.5,448.5" stroke="#0000ff" stroke-width="1" fill="none"/>
<polyline points="962.5,448.5 969.5,448.5" stroke="#ff0000" stroke-width="1" fill="none"/>
<polyline points="969.5,448.5 1094.5,448.5" stroke="#800040" stroke-width="1" fill="none"/>
<polyline points="896.5,462.5 932.5,462.5" stroke="#800040" stroke-width="1" fill="none"/>
<polyline points="932.5,462.5 940.5,462.5" stroke="#ff0000" stroke-width="1" fill="none"/>
<polyline points="940.5,462.5 942.9,460.2 947.3,464.8 951.7,460.2 956.1,464.8 960.5,460.2 962.5,462.5" stroke="#0000ff" stroke-width="1" fill="none"/>
<polyline points="962.5,462.5 969.5,462.5" stroke="#ff0000" stroke-width="1" fill="none"/>
<polyline points="969.5,462.5 1094.5,462.5" stroke="#800040" stroke-width="1" fill="none"/>
<polygon points="889.5,477.5 903.5,477.5 896.5,485" stroke="#ff0000" stroke-width="1" fill="none"/>
<rect x="889" y="500" width="227.5" height="117" stroke="#7a7a7a" stroke-width="1" fill="none" stroke-dasharray="1.8,1.5"/>
<text x="896.5" y="517.8" font-size="11.3" fill="#0000ff" font-weight="normal" text-anchor="start" textLength="213" lengthAdjust="spacingAndGlyphs" stroke="#0000ff" stroke-width="0.12">GNT3#   A16 Top-Block Swap Override</text>
<text x="896.5" y="529.8" font-size="11.3" fill="#0000ff" font-weight="normal" text-anchor="start" textLength="93.5" lengthAdjust="spacingAndGlyphs" stroke="#0000ff" stroke-width="0.12">(Internal PU 20K)</text>
<line x1="957.5" y1="553" x2="957.5" y2="565" stroke="#0000e0" stroke-width="1" stroke-dasharray="1.3,1.7"/>
<polyline points="911.5,602.5 911.5,587.5 947.5,587.5" stroke="#800040" stroke-width="1" fill="none"/>
<polyline points="947.5,587.5 955.5,587.5" stroke="#ff0000" stroke-width="1" fill="none"/>
<polyline points="955.5,587.5 957.9,585.2 962.3,589.8 966.7,585.2 971.1,589.8 975.5,585.2 977.5,587.5" stroke="#0000ff" stroke-width="1" fill="none"/>
<polyline points="977.5,587.5 984.5,587.5" stroke="#ff0000" stroke-width="1" fill="none"/>
<polyline points="984.5,587.5 1095.5,587.5" stroke="#800040" stroke-width="1" fill="none"/>
<polygon points="904.5,602.5 918.5,602.5 911.5,610" stroke="#ff0000" stroke-width="1" fill="none"/>
<rect x="1131.5" y="396.5" width="396" height="220.5" stroke="#7a7a7a" stroke-width="1" fill="none" stroke-dasharray="1.8,1.5"/>
<rect x="1212" y="404.5" width="265" height="72" stroke="#8000ff" stroke-width="2.6" fill="none"/>
<rect x="1344.5" y="426.5" width="22" height="36" stroke="#0000ff" stroke-width="1.2" fill="none"/>
<polyline points="1337.5,433.5 1344.5,433.5" stroke="#ff0000" stroke-width="1" fill="none"/>
<polyline points="1366.5,433.5 1374.5,433.5" stroke="#ff0000" stroke-width="1" fill="none"/>
<polyline points="1344.5,433.5 1348.5,433.5 1351.5,436.1 1355.5,430.9 1359.5,436.1 1363.5,430.9 1366.5,433.5" stroke="#0000ff" stroke-width="1" fill="none"/>
<polyline points="1219.5,433.5 1337.5,433.5" stroke="#800040" stroke-width="1" fill="none"/>
<polyline points="1374.5,433.5 1439.5,433.5" stroke="#800040" stroke-width="1" fill="none"/>
<polyline points="1337.5,440.5 1344.5,440.5" stroke="#ff0000" stroke-width="1" fill="none"/>
<polyline points="1366.5,440.5 1374.5,440.5" stroke="#ff0000" stroke-width="1" fill="none"/>
<polyline points="1344.5,440.5 1348.5,440.5 1351.5,443.1 1355.5,437.9 1359.5,443.1 1363.5,437.9 1366.5,440.5" stroke="#0000ff" stroke-width="1" fill="none"/>
<polyline points="1219.5,440.5 1337.5,440.5" stroke="#800040" stroke-width="1" fill="none"/>
<polyline points="1374.5,440.5 1439.5,440.5" stroke="#800040" stroke-width="1" fill="none"/>
<polyline points="1337.5,448.5 1344.5,448.5" stroke="#ff0000" stroke-width="1" fill="none"/>
<polyline points="1366.5,448.5 1374.5,448.5" stroke="#ff0000" stroke-width="1" fill="none"/>
<polyline points="1344.5,448.5 1348.5,448.5 1351.5,451.1 1355.5,445.9 1359.5,451.1 1363.5,445.9 1366.5,448.5" stroke="#0000ff" stroke-width="1" fill="none"/>
<polyline points="1219.5,448.5 1337.5,448.5" stroke="#800040" stroke-width="1" fill="none"/>
<polyline points="1374.5,448.5 1439.5,448.5" stroke="#800040" stroke-width="1" fill="none"/>
<polyline points="1337.5,455.5 1344.5,455.5" stroke="#ff0000" stroke-width="1" fill="none"/>
<polyline points="1366.5,455.5 1374.5,455.5" stroke="#ff0000" stroke-width="1" fill="none"/>
<polyline points="1344.5,455.5 1348.5,455.5 1351.5,458.1 1355.5,452.9 1359.5,458.1 1363.5,452.9 1366.5,455.5" stroke="#0000ff" stroke-width="1" fill="none"/>
<polyline points="1219.5,455.5 1337.5,455.5" stroke="#800040" stroke-width="1" fill="none"/>
<polyline points="1374.5,455.5 1439.5,455.5" stroke="#800040" stroke-width="1" fill="none"/>
<circle cx="1439.5" cy="413.5" r="2" stroke="#ff0000" stroke-width="1" fill="#fff"/>
<polyline points="1439.5,415.5 1439.5,455.5" stroke="#800040" stroke-width="1" fill="none"/>
<circle cx="1439.5" cy="433.5" r="1.9" fill="#ff00ff"/>
<circle cx="1439.5" cy="440.5" r="1.9" fill="#ff00ff"/>
<circle cx="1439.5" cy="448.5" r="1.9" fill="#ff00ff"/>
<text x="1143.5" y="510.2" font-size="9.8" fill="#0b5cab" font-weight="bold" text-anchor="start" textLength="245" lengthAdjust="spacingAndGlyphs">DisplayPort* Disabling and Termination Guidelines</text>
<rect x="1142.5" y="517.5" width="379" height="91" stroke="#000" stroke-width="1.4" fill="none"/>
<polyline points="1142.5,544.5 1521.5,544.5" stroke="#303030" stroke-width="1" fill="none"/>
<polyline points="1142.5,566.5 1521.5,566.5" stroke="#303030" stroke-width="1" fill="none"/>
<polyline points="1142.5,586.5 1521.5,586.5" stroke="#303030" stroke-width="1" fill="none"/>
<polyline points="1219.5,517.5 1219.5,608.5" stroke="#404040" stroke-width="1" fill="none"/>
<polyline points="1435.5,517.5 1435.5,608.5" stroke="#404040" stroke-width="1" fill="none"/>
<polyline points="1307.5,517.5 1307.5,608.5" stroke="#000" stroke-width="1.4" fill="none"/>
<text x="1172.7" y="533" font-size="7.5" fill="#1f5faf" font-weight="bold" text-anchor="start" textLength="17.4" lengthAdjust="spacingAndGlyphs">Port</text>
<text x="1252.5" y="533" font-size="7.5" fill="#1f5faf" font-weight="bold" text-anchor="start" textLength="22.6" lengthAdjust="spacingAndGlyphs">Strap</text>
<text x="1328.7" y="533" font-size="7.5" fill="#1f5faf" font-weight="bold" text-anchor="start" textLength="86.3" lengthAdjust="spacingAndGlyphs">How to Enable Port?</text>
<text x="1446" y="528.3" font-size="7.5" fill="#1f5faf" font-weight="bold" text-anchor="start" textLength="64" lengthAdjust="spacingAndGlyphs">How to Disable</text>
<text x="1466.8" y="538" font-size="7.5" fill="#1f5faf" font-weight="bold" text-anchor="start" textLength="22.8" lengthAdjust="spacingAndGlyphs">Port?</text>
<text x="1146.8" y="553.3" font-size="7" fill="#000" font-weight="normal" text-anchor="start" textLength="20.2" lengthAdjust="spacingAndGlyphs">Port B</text>
<text x="1234.9" y="553.3" font-size="7" fill="#000" font-weight="normal" text-anchor="start" textLength="57.8" lengthAdjust="spacingAndGlyphs">DDPB_CTRLDATA</text>
<text x="1314.7" y="553.3" font-size="7" fill="#000" font-weight="normal" text-anchor="start" textLength="113.2" lengthAdjust="spacingAndGlyphs">Pull up to 3.3 V with 2.2-kΩ ±5%</text>
<text x="1359.3" y="561.2" font-size="7" fill="#000" font-weight="normal" text-anchor="start" textLength="24.6" lengthAdjust="spacingAndGlyphs">resistor</text>
<text x="1458.5" y="553.3" font-size="7" fill="#000" font-weight="normal" text-anchor="start" textLength="38.9" lengthAdjust="spacingAndGlyphs">No Connect</text>
<text x="1146.8" y="574.8" font-size="7" fill="#000" font-weight="normal" text-anchor="start" textLength="20.2" lengthAdjust="spacingAndGlyphs">Port C</text>
<text x="1234.9" y="574.8" font-size="7" fill="#000" font-weight="normal" text-anchor="start" textLength="57.8" lengthAdjust="spacingAndGlyphs">DDPC_CTRLDATA</text>
<text x="1314.7" y="574.8" font-size="7" fill="#000" font-weight="normal" text-anchor="start" textLength="113.2" lengthAdjust="spacingAndGlyphs">Pull up to 3.3 V with 2.2-kΩ ±5%</text>
<text x="1359.3" y="582.4" font-size="7" fill="#000" font-weight="normal" text-anchor="start" textLength="24.6" lengthAdjust="spacingAndGlyphs">resistor</text>
<text x="1458.5" y="574.8" font-size="7" fill="#000" font-weight="normal" text-anchor="start" textLength="38.9" lengthAdjust="spacingAndGlyphs">No Connect</text>
<text x="1146.8" y="595.5" font-size="7" fill="#000" font-weight="normal" text-anchor="start" textLength="20.2" lengthAdjust="spacingAndGlyphs">Port D</text>
<text x="1234.9" y="595.5" font-size="7" fill="#000" font-weight="normal" text-anchor="start" textLength="57.8" lengthAdjust="spacingAndGlyphs">DDPD_CTRLDATA</text>
<text x="1314.7" y="595.5" font-size="7" fill="#000" font-weight="normal" text-anchor="start" textLength="113.2" lengthAdjust="spacingAndGlyphs">Pull up to 3.3 V with 2.2-kΩ ±5%</text>
<text x="1359.3" y="603.8" font-size="7" fill="#000" font-weight="normal" text-anchor="start" textLength="24.6" lengthAdjust="spacingAndGlyphs">resistor</text>
<text x="1458.5" y="595.5" font-size="7" fill="#000" font-weight="normal" text-anchor="start" textLength="38.9" lengthAdjust="spacingAndGlyphs">No Connect</text>
<rect x="29.5" y="521.5" width="213.5" height="80" stroke="#8000ff" stroke-width="2.6" fill="none"/>
<circle cx="110.5" cy="538.5" r="2" stroke="#ff0000" stroke-width="1" fill="#fff"/>
<polyline points="110.5,540.5 110.5,565.5 125.5,565.5" stroke="#800040" stroke-width="1" fill="none"/>
<circle cx="88.5" cy="552.5" r="2" stroke="#ff0000" stroke-width="1" fill="#fff"/>
<polyline points="88.5,554.5 88.5,573.5 125.5,573.5" stroke="#800040" stroke-width="1" fill="none"/>
<circle cx="66.5" cy="538.5" r="2" stroke="#ff0000" stroke-width="1" fill="#fff"/>
<polyline points="66.5,540.5 66.5,580.5 125.5,580.5" stroke="#800040" stroke-width="1" fill="none"/>
<circle cx="44.5" cy="552.5" r="2" stroke="#ff0000" stroke-width="1" fill="#fff"/>
<polyline points="44.5,554.5 44.5,587.5 125.5,587.5" stroke="#800040" stroke-width="1" fill="none"/>
<rect x="132.5" y="558.5" width="22" height="37" stroke="#0000ff" stroke-width="1.2" fill="none"/>
<polyline points="125.5,565.5 132.5,565.5" stroke="#ff0000" stroke-width="1" fill="none"/>
<polyline points="154.5,565.5 162.5,565.5" stroke="#ff0000" stroke-width="1" fill="none"/>
<polyline points="132.5,565.5 136.5,565.5 139.5,568.1 143.5,562.9 147.5,568.1 151.5,562.9 154.5,565.5" stroke="#0000ff" stroke-width="1" fill="none"/>
<polyline points="162.5,565.5 235.5,565.5" stroke="#800040" stroke-width="1" fill="none"/>
<polyline points="125.5,573.5 132.5,573.5" stroke="#ff0000" stroke-width="1" fill="none"/>
<polyline points="154.5,573.5 162.5,573.5" stroke="#ff0000" stroke-width="1" fill="none"/>
<polyline points="132.5,573.5 136.5,573.5 139.5,576.1 143.5,570.9 147.5,576.1 151.5,570.9 154.5,573.5" stroke="#0000ff" stroke-width="1" fill="none"/>
<polyline points="162.5,573.5 235.5,573.5" stroke="#800040" stroke-width="1" fill="none"/>
<polyline points="125.5,580.5 132.5,580.5" stroke="#ff0000" stroke-width="1" fill="none"/>
<polyline points="154.5,580.5 162.5,580.5" stroke="#ff0000" stroke-width="1" fill="none"/>
<polyline points="132.5,580.5 136.5,580.5 139.5,583.1 143.5,577.9 147.5,583.1 151.5,577.9 154.5,580.5" stroke="#0000ff" stroke-width="1" fill="none"/>
<polyline points="162.5,580.5 235.5,580.5" stroke="#800040" stroke-width="1" fill="none"/>
<polyline points="125.5,587.5 132.5,587.5" stroke="#ff0000" stroke-width="1" fill="none"/>
<polyline points="154.5,587.5 162.5,587.5" stroke="#ff0000" stroke-width="1" fill="none"/>
<polyline points="132.5,587.5 136.5,587.5 139.5,590.1 143.5,584.9 147.5,590.1 151.5,584.9 154.5,587.5" stroke="#0000ff" stroke-width="1" fill="none"/>
<polyline points="162.5,587.5 235.5,587.5" stroke="#800040" stroke-width="1" fill="none"/>
<polyline points="29.5,617.5 29.5,653.5" stroke="#800040" stroke-width="1" fill="none"/>
<circle cx="29.5" cy="631.5" r="1.9" fill="#ff00ff"/>
<circle cx="29.5" cy="646.5" r="1.9" fill="#ff00ff"/>
<polyline points="29.5,617.5 66.5,617.5" stroke="#800040" stroke-width="1" fill="none"/>
<polyline points="66.5,617.5 73.5,617.5" stroke="#ff0000" stroke-width="1" fill="none"/>
<polyline points="73.5,617.5 75.9,615.2 80.3,619.8 84.7,615.2 89.1,619.8 93.5,615.2 95.5,617.5" stroke="#0000ff" stroke-width="1" fill="none"/>
<polyline points="95.5,617.5 103.5,617.5" stroke="#ff0000" stroke-width="1" fill="none"/>
<polyline points="103.5,617.5 220.5,617.5" stroke="#800040" stroke-width="1" fill="none"/>
<polyline points="29.5,631.5 66.5,631.5" stroke="#800040" stroke-width="1" fill="none"/>
<polyline points="66.5,631.5 73.5,631.5" stroke="#ff0000" stroke-width="1" fill="none"/>
<polyline points="73.5,631.5 75.9,629.2 80.3,633.8 84.7,629.2 89.1,633.8 93.5,629.2 95.5,631.5" stroke="#0000ff" stroke-width="1" fill="none"/>
<polyline points="95.5,631.5 103.5,631.5" stroke="#ff0000" stroke-width="1" fill="none"/>
<polyline points="103.5,631.5 220.5,631.5" stroke="#800040" stroke-width="1" fill="none"/>
<polyline points="29.5,646.5 66.5,646.5" stroke="#800040" stroke-width="1" fill="none"/>
<polyline points="66.5,646.5 73.5,646.5" stroke="#ff0000" stroke-width="1" fill="none"/>
<polyline points="73.5,646.5 75.9,644.2 80.3,648.8 84.7,644.2 89.1,648.8 93.5,644.2 95.5,646.5" stroke="#0000ff" stroke-width="1" fill="none"/>
<polyline points="95.5,646.5 103.5,646.5" stroke="#ff0000" stroke-width="1" fill="none"/>
<polyline points="103.5,646.5 220.5,646.5" stroke="#800040" stroke-width="1" fill="none"/>
<polygon points="22.5,653.5 36.5,653.5 29.5,661" stroke="#ff0000" stroke-width="1" fill="none"/>
<rect x="15" y="668.5" width="220.5" height="51" stroke="#7a7a7a" stroke-width="1" fill="none" stroke-dasharray="1.8,1.5"/>
<circle cx="29.5" cy="685.5" r="2" stroke="#ff0000" stroke-width="1" fill="#fff"/>
<polyline points="29.5,687.5 29.5,705.5" stroke="#800040" stroke-width="1" fill="none"/>
<polyline points="29.5,705.5 66.5,705.5" stroke="#800040" stroke-width="1" fill="none"/>
<polyline points="66.5,705.5 73.5,705.5" stroke="#ff0000" stroke-width="1" fill="none"/>
<polyline points="73.5,705.5 75.9,703.2 80.3,707.8 84.7,703.2 89.1,707.8 93.5,703.2 95.5,705.5" stroke="#0000ff" stroke-width="1" fill="none"/>
<polyline points="95.5,705.5 103.5,705.5" stroke="#ff0000" stroke-width="1" fill="none"/>
<polyline points="103.5,705.5 220.5,705.5" stroke="#800040" stroke-width="1" fill="none"/>
<rect x="29.5" y="764" width="309" height="161.5" stroke="#7a7a7a" stroke-width="1" fill="none" stroke-dasharray="1.8,1.5"/>
<text x="37.5" y="783" font-size="11.3" fill="#0000ff" font-weight="normal" text-anchor="start" textLength="69" lengthAdjust="spacingAndGlyphs" stroke="#0000ff" stroke-width="0.12">DSWVRMEN</text>
<text x="37.5" y="794.5" font-size="11.3" fill="#0000ff" font-weight="normal" text-anchor="start" textLength="277.5" lengthAdjust="spacingAndGlyphs" stroke="#0000ff" stroke-width="0.12">Deep S4/S5 Well On-Die Voltage Regulator Enable</text>
<polyline points="51.5,844.5 140.5,844.5" stroke="#800040" stroke-width="1" fill="none"/>
<circle cx="88.5" cy="844.5" r="1.9" fill="#ff00ff"/>
<polyline points="139.5,844.5 147.5,844.5" stroke="#ff0000" stroke-width="1" fill="none"/>
<polyline points="147.5,844.5 149.9,842.2 154.3,846.8 158.7,842.2 163.1,846.8 167.5,842.2 169.5,844.5" stroke="#0000ff" stroke-width="1" fill="none"/>
<polyline points="169.5,844.5 176.5,844.5" stroke="#ff0000" stroke-width="1" fill="none"/>
<polyline points="176.5,844.5 242.5,844.5" stroke="#800040" stroke-width="1" fill="none"/>
<circle cx="242.5" cy="825.5" r="2" stroke="#ff0000" stroke-width="1" fill="#fff"/>
<polyline points="242.5,827.5 242.5,844.5" stroke="#800040" stroke-width="1" fill="none"/>
<polyline points="88.5,844.5 88.5,859.5 140.5,859.5" stroke="#800040" stroke-width="1" fill="none"/>
<polyline points="139.5,859.5 147.5,859.5" stroke="#ff0000" stroke-width="1" fill="none"/>
<polyline points="147.5,859.5 149.9,857.2 154.3,861.8 158.7,857.2 163.1,861.8 167.5,857.2 169.5,859.5" stroke="#0000ff" stroke-width="1" fill="none"/>
<polyline points="169.5,859.5 176.5,859.5" stroke="#ff0000" stroke-width="1" fill="none"/>
<polyline points="176.5,859.5 242.5,859.5" stroke="#800040" stroke-width="1" fill="none"/>
<polyline points="242.5,859.5 242.5,874.5" stroke="#800040" stroke-width="1" fill="none"/>
<polygon points="235.5,874.5 249.5,874.5 242.5,882" stroke="#ff0000" stroke-width="1" fill="none"/>
<line x1="97.5" y1="876" x2="97.5" y2="888" stroke="#0000e0" stroke-width="1" stroke-dasharray="1.3,1.7"/>
<path d="M463.5,646.5 H492 A22,22 0 0 1 492,690.5 H463.5 Z" stroke="#0000ff" stroke-width="1.2" fill="none"/>
<circle cx="485.5" cy="619.5" r="2" stroke="#ff0000" stroke-width="1" fill="#fff"/>
<polyline points="485.5,621.5 485.5,639.5" stroke="#800040" stroke-width="1" fill="none"/>
<polyline points="485.5,639.5 485.5,646.5" stroke="#ff0000" stroke-width="1" fill="none"/>
<polyline points="485.5,690.5 485.5,697.5" stroke="#ff0000" stroke-width="1" fill="none"/>
<polyline points="485.5,697.5 485.5,712.5" stroke="#800040" stroke-width="1" fill="none"/>
<polygon points="478.5,712.5 492.5,712.5 485.5,720" stroke="#ff0000" stroke-width="1" fill="none"/>
<polygon points="360.5,657.5 375.5,657.5 382.5,661.5 375.5,664.5 360.5,664.5" stroke="#ff0000" stroke-width="1" fill="none"/>
<polyline points="382.5,661.5 456.5,661.5" stroke="#800040" stroke-width="1" fill="none"/>
<polyline points="456.5,661.5 463.5,661.5" stroke="#ff0000" stroke-width="1" fill="none"/>
<polygon points="360.5,671.5 375.5,671.5 382.5,675.5 375.5,678.5 360.5,678.5" stroke="#ff0000" stroke-width="1" fill="none"/>
<polyline points="382.5,675.5 456.5,675.5" stroke="#800040" stroke-width="1" fill="none"/>
<polyline points="456.5,675.5 463.5,675.5" stroke="#ff0000" stroke-width="1" fill="none"/>
<polyline points="514.5,668.5 521.5,668.5" stroke="#ff0000" stroke-width="1" fill="none"/>
<polyline points="521.5,668.5 661.5,668.5" stroke="#800040" stroke-width="1" fill="none"/>
<path d="M632.5,815.5 H609.5 A14.4,14.4 0 0 0 609.5,844.3 H632.5 Z" stroke="#0000ff" stroke-width="1.2" fill="none"/>
<circle cx="617.5" cy="788.5" r="2" stroke="#ff0000" stroke-width="1" fill="#fff"/>
<polyline points="617.5,790.5 617.5,807.5" stroke="#800040" stroke-width="1" fill="none"/>
<polyline points="617.5,807.5 617.5,815.5" stroke="#ff0000" stroke-width="1" fill="none"/>
<polyline points="617.5,844.5 617.5,852.5" stroke="#ff0000" stroke-width="1" fill="none"/>
<polyline points="617.5,852.5 617.5,873.5" stroke="#800040" stroke-width="1" fill="none"/>
<polygon points="610.5,873.5 624.5,873.5 617.5,881" stroke="#ff0000" stroke-width="1" fill="none"/>
<polyline points="587.5,830.5 595.5,830.5" stroke="#ff0000" stroke-width="1" fill="none"/>
<polyline points="507.5,830.5 587.5,830.5" stroke="#800040" stroke-width="1" fill="none"/>
<polygon points="485.5,830.5 492.5,826.5 507.5,826.5 507.5,833.5 492.5,833.5" stroke="#ff0000" stroke-width="1" fill="none"/>
<circle cx="543.5" cy="830.5" r="1.9" fill="#ff00ff"/>
<polyline points="543.5,830.5 543.5,844.5" stroke="#800040" stroke-width="1" fill="none"/>
<polyline points="543.5,844.5 543.5,852.5" stroke="#ff0000" stroke-width="1" fill="none"/>
<polyline points="543.5,852.5 545.8,854.9 541.2,859.3 545.8,863.7 541.2,868.1 545.8,872.5 543.5,874.5" stroke="#0000ff" stroke-width="1" fill="none"/>
<polyline points="543.5,874.5 543.5,881.5" stroke="#ff0000" stroke-width="1" fill="none"/>
<polyline points="543.5,881.5 543.5,888.5" stroke="#800040" stroke-width="1" fill="none"/>
<polygon points="536.5,888.5 550.5,888.5 543.5,896" stroke="#ff0000" stroke-width="1" fill="none"/>
<polygon points="632.5,822.5 635.5,819.9 635.5,825.1" stroke="#ff0000" stroke-width="1" fill="#ff0000"/>
<polyline points="635.5,822.5 640.5,822.5" stroke="#ff0000" stroke-width="1" fill="none"/>
<polygon points="632.5,837.5 635.5,834.9 635.5,840.1" stroke="#ff0000" stroke-width="1" fill="#ff0000"/>
<polyline points="635.5,837.5 640.5,837.5" stroke="#ff0000" stroke-width="1" fill="none"/>
<polyline points="640.5,822.5 720.5,822.5" stroke="#800040" stroke-width="1" fill="none"/>
<polyline points="640.5,837.5 661.5,837.5 661.5,822.5" stroke="#800040" stroke-width="1" fill="none"/>
<circle cx="661.5" cy="822.5" r="1.9" fill="#ff00ff"/>
<rect x="727.5" y="661" width="234.5" height="175.5" stroke="#8000ff" stroke-width="2.6" fill="none"/>
<rect x="801" y="815" width="125" height="36.5" stroke="#808000" stroke-width="2.6" fill="none"/>
<polygon points="735.5,741.5 742.5,737.5 757.5,737.5 757.5,744.5 742.5,744.5" stroke="#ff0000" stroke-width="1" fill="none"/>
<polyline points="757.5,741.5 837.5,741.5" stroke="#800040" stroke-width="1" fill="none"/>
<circle cx="786.5" cy="741.5" r="1.9" fill="#ff00ff"/>
<circle cx="808.5" cy="741.5" r="1.9" fill="#ff00ff"/>
<circle cx="837.5" cy="741.5" r="1.9" fill="#ff00ff"/>
<circle cx="837.5" cy="685.5" r="2" stroke="#ff0000" stroke-width="1" fill="#fff"/>
<polyline points="837.5,687.5 837.5,697.5" stroke="#800040" stroke-width="1" fill="none"/>
<polyline points="837.5,697.5 837.5,705.5" stroke="#ff0000" stroke-width="1" fill="none"/>
<polyline points="837.5,705.5 839.8,707.9 835.2,712.2 839.8,716.5 835.2,720.8 839.8,725.1 837.5,727" stroke="#0000ff" stroke-width="1" fill="none"/>
<polyline points="837.5,726.5 837.5,735.5" stroke="#ff0000" stroke-width="1" fill="none"/>
<polyline points="837.5,735.5 837.5,741.5" stroke="#800040" stroke-width="1" fill="none"/>
<polyline points="837.5,741.5 837.5,749.5" stroke="#800040" stroke-width="1" fill="none"/>
<polyline points="837.5,749.5 837.5,756.5" stroke="#ff0000" stroke-width="1" fill="none"/>
<path d="M828.5,756.5 H844.5 V771.5 H828.5 Z M837.5,771.5 L837.5,764.5 H841" stroke="#0000ff" stroke-width="1.3" fill="none"/>
<path d="M841,760.5 L844.5,764.5 L841,768.5 Z M825,762.5 H831 M828.5,762.5 L825,766 H831 Z" stroke="#0000ff" stroke-width="1" fill="#0000ff"/>
<path d="M848.5,756.3 V771.3 M848.5,764.5 H852" stroke="#0000ff" stroke-width="1.3" fill="none"/>
<polygon points="852,764.5 855,761.9 855,767.1" stroke="#ff0000" stroke-width="1" fill="#ff0000"/>
<polyline points="854.5,764.5 860.5,764.5" stroke="#ff0000" stroke-width="1" fill="none"/>
<polyline points="860.5,764.5 955.5,764.5" stroke="#800040" stroke-width="1" fill="none"/>
<circle cx="918.5" cy="764.5" r="1.9" fill="#ff00ff"/>
<polyline points="837.5,771.5 837.5,779.5" stroke="#ff0000" stroke-width="1" fill="none"/>
<polyline points="837.5,779.5 837.5,800.5" stroke="#800040" stroke-width="1" fill="none"/>
<polygon points="830.5,800.5 844.5,800.5 837.5,808" stroke="#ff0000" stroke-width="1" fill="none"/>
<polyline points="786.5,741.5 786.5,755.5" stroke="#ff0000" stroke-width="1" fill="none"/>
<path d="M779,765.5 H793 M779,769.5 H793" stroke="#0000ff" stroke-width="1.5"/>
<polyline points="786.5,755.5 786.5,765.5" stroke="#ff0000" stroke-width="1" fill="none"/>
<polyline points="786.5,769.5 786.5,785.5" stroke="#ff0000" stroke-width="1" fill="none"/>
<polygon points="779.5,785.5 793.5,785.5 786.5,793" stroke="#ff0000" stroke-width="1" fill="none"/>
<polyline points="808.5,741.5 808.5,830.5 837.5,830.5" stroke="#800040" stroke-width="1" fill="none"/>
<polyline points="837.5,830.5 844.5,830.5" stroke="#ff0000" stroke-width="1" fill="none"/>
<path d="M844.5,830.5 L847.5,827.5 L851.5,831.3 L855.7,827.5 L860.2,831.3 L864.5,827.5 L866.8,830.5 M844.5,830.5 V832.5 H866.8 V830.5" stroke="#0000ff" stroke-width="1.1" fill="none"/>
<polyline points="866.5,830.5 874.5,830.5" stroke="#ff0000" stroke-width="1" fill="none"/>
<polyline points="874.5,830.5 918.5,830.5 918.5,764.5" stroke="#800040" stroke-width="1" fill="none"/>
<polyline points="0.5,0.5 0.5,0.5" stroke="#800040" stroke-width="1" fill="none"/>
<polyline points="700.5,822.5 720.5,822.5" stroke="#800040" stroke-width="1" fill="none"/>
<path d="M1160.5,749.5 H1138.5 A14.5,14.5 0 0 0 1138.5,778.5 H1160.5 Z" stroke="#0000ff" stroke-width="1.2" fill="none"/>
<circle cx="1145.5" cy="729.5" r="2" stroke="#ff0000" stroke-width="1" fill="#fff"/>
<polyline points="1145.5,731.5 1145.5,742.5" stroke="#800040" stroke-width="1" fill="none"/>
<polyline points="1145.5,742.5 1145.5,749.5" stroke="#ff0000" stroke-width="1" fill="none"/>
<polyline points="1145.5,778.5 1145.5,786.5" stroke="#ff0000" stroke-width="1" fill="none"/>
<polyline points="1145.5,786.5 1145.5,815.5" stroke="#800040" stroke-width="1" fill="none"/>
<polygon points="1138.5,815.5 1152.5,815.5 1145.5,823" stroke="#ff0000" stroke-width="1" fill="none"/>
<polygon points="1035.5,764.5 1042.5,760.5 1057.5,760.5 1057.5,767.5 1042.5,767.5" stroke="#ff0000" stroke-width="1" fill="none"/>
<polyline points="1057.5,764.5 1116.5,764.5" stroke="#800040" stroke-width="1" fill="none"/>
<polyline points="1116.5,764.5 1124.5,764.5" stroke="#ff0000" stroke-width="1" fill="none"/>
<circle cx="1094.5" cy="764.5" r="1.9" fill="#ff00ff"/>
<polyline points="1094.5,764.5 1094.5,786.5" stroke="#800040" stroke-width="1" fill="none"/>
<polyline points="1094.5,786.5 1094.5,793.5" stroke="#ff0000" stroke-width="1" fill="none"/>
<polyline points="1094.5,793.5 1096.8,795.9 1092.2,800.2 1096.8,804.5 1092.2,808.8 1096.8,813.1 1094.5,815" stroke="#0000ff" stroke-width="1" fill="none"/>
<polyline points="1094.5,815.5 1094.5,822.5" stroke="#ff0000" stroke-width="1" fill="none"/>
<polyline points="1094.5,822.5 1094.5,837.5" stroke="#800040" stroke-width="1" fill="none"/>
<polygon points="1087.5,837.5 1101.5,837.5 1094.5,845" stroke="#ff0000" stroke-width="1" fill="none"/>
<polygon points="1160.5,756.5 1163.5,753.9 1163.5,759.1" stroke="#ff0000" stroke-width="1" fill="#ff0000"/>
<polyline points="1163.5,756.5 1168.5,756.5" stroke="#ff0000" stroke-width="1" fill="none"/>
<polyline points="1168.5,756.5 1455.5,756.5" stroke="#800040" stroke-width="1" fill="none"/>
<polygon points="1160.5,771.5 1163.5,768.9 1163.5,774.1" stroke="#ff0000" stroke-width="1" fill="#ff0000"/>
<polyline points="1163.5,771.5 1168.5,771.5" stroke="#ff0000" stroke-width="1" fill="none"/>
<polyline points="1168.5,771.5 1455.5,771.5" stroke="#800040" stroke-width="1" fill="none"/>
</svg>
</body></html>
